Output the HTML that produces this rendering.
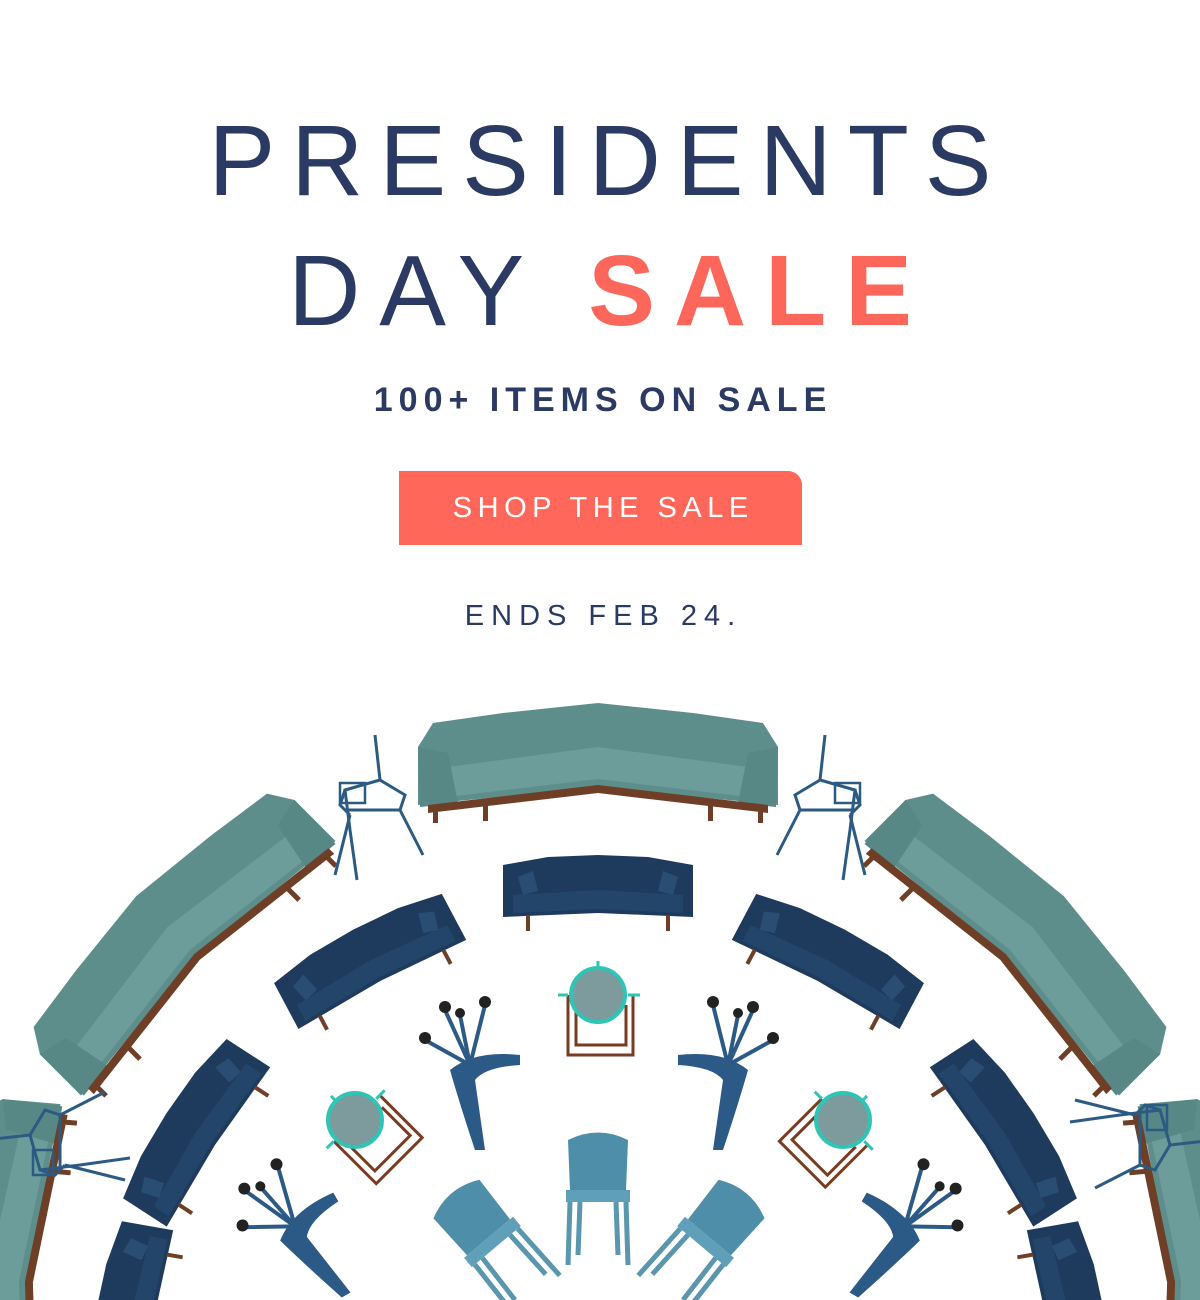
<!DOCTYPE html>
<html><head><meta charset="utf-8"><style>
html,body{margin:0;padding:0;background:#fff;overflow:hidden;}
body{width:1200px;height:1300px;position:relative;overflow:hidden;font-family:"Liberation Sans",sans-serif;color:#2b3a63;}
.t{position:absolute;left:0;width:1200px;text-align:center;white-space:nowrap;}
#h1{top:106px;font-size:100px;letter-spacing:16px;text-indent:16px;line-height:110px;}
#h2{top:236px;font-size:100px;letter-spacing:19px;text-indent:19px;line-height:110px;}
#h2 b{color:#fd665a;font-weight:bold;}
#sub{top:380px;font-size:34px;font-weight:bold;letter-spacing:6px;text-indent:6px;line-height:40px;}
#btn{position:absolute;left:399px;top:471px;width:403px;height:74px;background:#fe675a;border-top-right-radius:14px;color:#fff;font-size:29px;letter-spacing:5.5px;text-indent:5.5px;text-align:center;line-height:74px;}
#ends{top:598px;font-size:29px;letter-spacing:7px;text-indent:7px;line-height:36px;}
svg{position:absolute;left:0;top:0;}
</style></head><body>
<div class="t" id="h1">PRESIDENTS</div>
<div class="t" id="h2">DAY <b>SALE</b></div>
<div class="t" id="sub">100+ ITEMS ON SALE</div>
<div id="btn">SHOP THE SALE</div>
<div class="t" id="ends">ENDS FEB 24.</div>
<svg width="1200" height="1300" viewBox="0 0 1200 1300">
<defs>
<g id="sec">
<path d="M-180,-18 L-165,-42 L-95,-52 L0,-62 L95,-52 L165,-42 L180,-18 L180,40 L0,22 L-180,40Z" fill="#5e8e8c"/>
<path d="M-150,2 L0,-18 L150,2 L150,32 L0,14 L-150,32Z" fill="#6c9d9b"/>
<path d="M-180,-18 L-150,-12 L-140,38 L-178,42Z" fill="#588886"/>
<path d="M180,-18 L150,-12 L140,38 L178,42Z" fill="#588886"/>
<path d="M-170,40 L0,20 L170,40 L170,48 L0,28 L-170,48Z" fill="#6e3f26"/>
<rect x="-165" y="44" width="5" height="14" fill="#6e3f26"/><rect x="160" y="44" width="5" height="14" fill="#6e3f26"/>
<rect x="-115" y="38" width="5" height="18" fill="#6e3f26"/><rect x="110" y="38" width="5" height="18" fill="#6e3f26"/>
</g>
<g id="sofa">
<path d="M-95,-30 L-50,-38 L0,-40 L50,-38 L95,-30 L95,22 L0,18 L-95,22Z" fill="#1e3b5e"/>
<path d="M-85,0 L0,-5 L85,0 L85,18 L0,14 L-85,18Z" fill="#24456a"/>
<path d="M-80,-18 L-65,-24 L-60,-4 L-75,0Z" fill="#2a4d74"/><path d="M80,-18 L65,-24 L60,-4 L75,0Z" fill="#2a4d74"/>
<rect x="-72" y="20" width="4" height="16" fill="#6e3f26"/><rect x="68" y="20" width="4" height="16" fill="#6e3f26"/>
</g>
<g id="ch" fill="none" stroke="#2b5a82" stroke-width="3">
<path d="M0,-70 L5,-25 L-30,-15 L-25,25 L-18,75"/><path d="M5,-25 L30,-10 L25,5 L-30,5"/>
<path d="M-30,-15 L-35,0 L-25,10"/><path d="M25,5 L48,50"/><path d="M-25,10 L-40,70"/>
<rect x="-35" y="-22" width="25" height="20" stroke-width="2.5"/>
</g>
<g id="tb">
<path d="M-30,0 L-30,60 L35,60 L35,0" fill="none" stroke="#7a3c20" stroke-width="3"/>
<path d="M-22,10 L-22,50 L28,50 L28,10" fill="none" stroke="#7a3c20" stroke-width="3"/>
<circle cx="0" cy="0" r="27" fill="#7d9a9c" stroke="#2ec4b6" stroke-width="4"/>
<path d="M-40,0 L-30,0 M30,0 L42,0 M0,-28 L0,-34" stroke="#2ec4b6" stroke-width="3"/>
</g>
<g id="tc">
<path d="M-20,-5 Q5,-25 50,-20 L50,-10 Q15,-8 5,5 Q10,40 15,75 L5,75 Q-10,30 -20,-5Z" fill="#2c5a86"/>
<path d="M0,-10 L-45,-35 M0,-10 L-25,-65 M0,-10 L-10,-60 M0,-10 L15,-70" stroke="#2c5a86" stroke-width="4" fill="none"/>
<circle cx="-45" cy="-37" r="6" fill="#222"/><circle cx="-25" cy="-68" r="6" fill="#222"/><circle cx="-10" cy="-62" r="5" fill="#222"/><circle cx="15" cy="-73" r="6" fill="#222"/>
</g>
<g id="pc">
<path d="M-30,-60 Q0,-75 30,-60 L28,-10 L-28,-10Z" fill="#4f8ea8"/>
<path d="M-32,-10 L32,-10 L32,2 L-32,2Z" fill="#5fa0b8"/>
<path d="M-28,2 L-30,65 M28,2 L30,65 M-18,2 L-20,55 M18,2 L20,55" stroke="#5a96ad" stroke-width="5"/>
</g>
</defs>
<use href="#sec" transform="translate(598,765)"/>
<use href="#sec" transform="translate(180,940) rotate(-45)"/>
<use href="#sec" transform="translate(1020,940) rotate(45)"/>
<use href="#sec" transform="translate(5,1280) rotate(-85)"/>
<use href="#sec" transform="translate(1195,1280) rotate(85)"/>
<use href="#sofa" transform="translate(598,895)"/>
<use href="#sofa" transform="translate(372,965) rotate(-28)"/>
<use href="#sofa" transform="translate(826,965) rotate(28)"/>
<use href="#sofa" transform="translate(200,1135) rotate(-57)"/>
<use href="#sofa" transform="translate(1000,1135) rotate(57)"/>
<use href="#sofa" transform="translate(135,1320) rotate(-80)"/>
<use href="#sofa" transform="translate(1065,1320) rotate(80)"/>
<use href="#ch" transform="translate(375,805)"/>
<use href="#ch" transform="translate(825,805) scale(-1,1)"/>
<use href="#ch" transform="translate(55,1140) rotate(-90)"/>
<use href="#ch" transform="translate(1145,1140) rotate(90)"/>
<use href="#tb" transform="translate(598,995)"/>
<use href="#tb" transform="translate(355,1120) rotate(-45)"/>
<use href="#tb" transform="translate(843,1120) rotate(45)"/>
<use href="#tc" transform="translate(470,1075)"/>
<use href="#tc" transform="translate(728,1075) scale(-1,1)"/>
<use href="#tc" transform="translate(300,1235) rotate(-30)"/>
<use href="#tc" transform="translate(900,1235) scale(-1,1) rotate(-30)"/>
<use href="#pc" transform="translate(598,1200)"/>
<use href="#pc" transform="translate(495,1245) rotate(-40)"/>
<use href="#pc" transform="translate(703,1245) rotate(40)"/>
</svg>
</body></html>
